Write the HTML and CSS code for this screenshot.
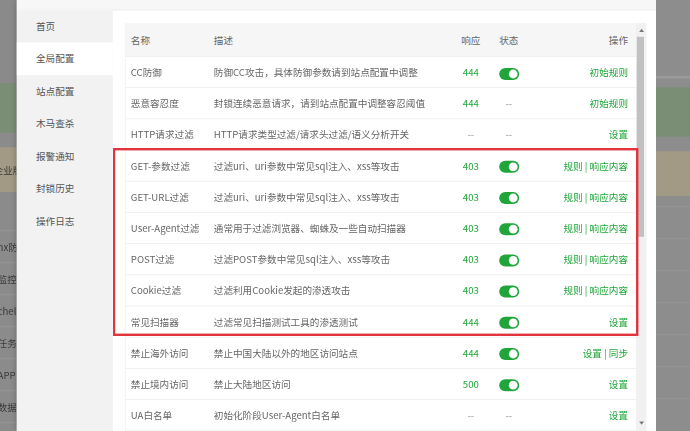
FILE: index.html
```html
<!DOCTYPE html>
<html lang="zh-CN">
<head>
    <meta charset="UTF-8">
    <meta name="viewport" content="width=device-width, initial-scale=1.0">
    <link rel="stylesheet" href="styles.css">
</head>
<body>
    <!-- the page is laid out at 125% and shrunk to 80%, so 12px text shows at 9.6px -->
    <div class="screen">
        <div class="backdrop backdrop-left">
            <div class="band band-top"></div>
            <div class="band band-green"></div>
            <div class="band band-gap"></div>
            <div class="band band-tan"><span>企业版</span></div>
            <div class="band band-gap2"></div>
            <div class="band band-row"><span>nx防</span></div>
            <div class="band band-row"><span>监控</span></div>
            <div class="band band-row"><span>chel</span></div>
            <div class="band band-row"><span>任务</span></div>
            <div class="band band-row"><span>APP</span></div>
            <div class="band band-row"><span>数据</span></div>
        </div>

        <div class="modal">
            <div class="modal-head"></div>
            <div class="modal-body">
                <ul class="menu">
                    <li>首页</li>
                    <li class="active">全局配置</li>
                    <li>站点配置</li>
                    <li>木马查杀</li>
                    <li>报警通知</li>
                    <li>封锁历史</li>
                    <li>操作日志</li>
                </ul>

                <div class="content">
                    <div class="table-wrap">
                        <table class="rules">
                            <colgroup>
                                <col class="col-name">
                                <col class="col-desc">
                                <col class="col-code">
                                <col class="col-state">
                                <col>
                            </colgroup>
                            <thead>
                                <tr>
                                    <th class="name">名称</th>
                                    <th>描述</th>
                                    <th class="center">响应</th>
                                    <th class="center">状态</th>
                                    <th class="ops">操作</th>
                                </tr>
                            </thead>
                            <tbody>
                                <tr>
                                    <td class="name">CC防御</td>
                                    <td>防御CC攻击，具体防御参数请到站点配置中调整</td>
                                    <td class="center green">444</td>
                                    <td class="center"><span class="switch"></span></td>
                                    <td class="ops"><a>初始规则</a></td>
                                </tr>
                                <tr>
                                    <td class="name">恶意容忍度</td>
                                    <td>封锁连续恶意请求，请到站点配置中调整容忍阈值</td>
                                    <td class="center green">444</td>
                                    <td class="center muted">--</td>
                                    <td class="ops"><a>初始规则</a></td>
                                </tr>
                                <tr>
                                    <td class="name">HTTP请求过滤</td>
                                    <td>HTTP请求类型过滤/请求头过滤/语义分析开关</td>
                                    <td class="center muted">--</td>
                                    <td class="center muted">--</td>
                                    <td class="ops"><a>设置</a></td>
                                </tr>
                                <tr>
                                    <td class="name">GET-参数过滤</td>
                                    <td>过滤uri、uri参数中常见sql注入、xss等攻击</td>
                                    <td class="center green">403</td>
                                    <td class="center"><span class="switch"></span></td>
                                    <td class="ops"><a>规则</a> | <a>响应内容</a></td>
                                </tr>
                                <tr>
                                    <td class="name">GET-URL过滤</td>
                                    <td>过滤uri、uri参数中常见sql注入、xss等攻击</td>
                                    <td class="center green">403</td>
                                    <td class="center"><span class="switch"></span></td>
                                    <td class="ops"><a>规则</a> | <a>响应内容</a></td>
                                </tr>
                                <tr>
                                    <td class="name">User-Agent过滤</td>
                                    <td>通常用于过滤浏览器、蜘蛛及一些自动扫描器</td>
                                    <td class="center green">403</td>
                                    <td class="center"><span class="switch"></span></td>
                                    <td class="ops"><a>规则</a> | <a>响应内容</a></td>
                                </tr>
                                <tr>
                                    <td class="name">POST过滤</td>
                                    <td>过滤POST参数中常见sql注入、xss等攻击</td>
                                    <td class="center green">403</td>
                                    <td class="center"><span class="switch"></span></td>
                                    <td class="ops"><a>规则</a> | <a>响应内容</a></td>
                                </tr>
                                <tr>
                                    <td class="name">Cookie过滤</td>
                                    <td>过滤利用Cookie发起的渗透攻击</td>
                                    <td class="center green">403</td>
                                    <td class="center"><span class="switch"></span></td>
                                    <td class="ops"><a>规则</a> | <a>响应内容</a></td>
                                </tr>
                                <tr>
                                    <td class="name">常见扫描器</td>
                                    <td>过滤常见扫描测试工具的渗透测试</td>
                                    <td class="center green">444</td>
                                    <td class="center"><span class="switch"></span></td>
                                    <td class="ops"><a>设置</a></td>
                                </tr>
                                <tr>
                                    <td class="name">禁止海外访问</td>
                                    <td>禁止中国大陆以外的地区访问站点</td>
                                    <td class="center green">444</td>
                                    <td class="center"><span class="switch"></span></td>
                                    <td class="ops"><a>设置</a> | <a>同步</a></td>
                                </tr>
                                <tr>
                                    <td class="name">禁止境内访问</td>
                                    <td>禁止大陆地区访问</td>
                                    <td class="center green">500</td>
                                    <td class="center"><span class="switch"></span></td>
                                    <td class="ops"><a>设置</a></td>
                                </tr>
                                <tr>
                                    <td class="name">UA白名单</td>
                                    <td>初始化阶段User-Agent白名单</td>
                                    <td class="center muted">--</td>
                                    <td class="center muted">--</td>
                                    <td class="ops"><a>设置</a></td>
                                </tr>
                            </tbody>
                        </table>

                        <div class="scrollbar">
                            <div class="arrow arrow-up"></div>
                            <div class="thumb"></div>
                            <div class="track"></div>
                            <div class="arrow arrow-down"></div>
                        </div>
                    </div>

                    <!-- highlight box drawn over the filter rows -->
                    <div class="highlight"></div>
                </div>
            </div>
        </div>

        <div class="backdrop backdrop-right">
            <div class="band band-rtop"></div>
            <div class="band band-line"></div>
            <div class="band band-rgap"></div>
            <div class="band band-green"></div>
            <div class="band band-gap"></div>
            <div class="band band-tan"></div>
            <div class="band band-rrow"></div>
            <div class="band band-rrow"></div>
            <div class="band band-rrow"></div>
            <div class="band band-rrow"></div>
            <div class="band band-rrow"></div>
            <div class="band band-rrow"></div>
            <div class="band band-rrow"></div>
        </div>
    </div>
</body>
</html>
```

FILE: styles.css
```css
html, body {
    margin: 0;
    padding: 0;
}

body {
    font-family: "Noto Sans CJK SC", "Noto Sans", sans-serif;
    font-size: 12px;
    width: 690px;
    height: 431px;
    overflow: hidden;
    background-color: #8b8b8b;
}

.screen {
    width: 862.5px;
    height: 538.75px;
    display: flex;
    transform: scale(0.8);
    transform-origin: 0 0;
}

/* dimmed page behind the dialog */
.backdrop {
    display: flex;
    flex-direction: column;
    overflow: hidden;
}

.backdrop-left {
    width: 21.25px;
    flex-shrink: 0;
}

.backdrop-right {
    flex: 1;
    background-color: #8d8d8d;
}

.band {
    flex-shrink: 0;
    color: #3a3a3a;
    white-space: nowrap;
    overflow: hidden;
}

.band span {
    display: block;
    margin-left: -3px;
}

.band-top {
    height: 103.75px;
    background-color: #8a8a8a;
}

.band-green {
    height: 62.5px;
    background-color: #7a8e75;
}

.band-gap {
    height: 17.5px;
}

.band-tan {
    height: 56.25px;
    line-height: 56.25px;
    background-color: #a29a84;
}

.band-tan span {
    margin-left: -8px;
}

.band-gap2 {
    height: 48px;
    border-bottom: 1px solid #999;
}

.band-row {
    height: 39px;
    line-height: 39px;
    border-bottom: 1px solid #999;
}

.band-rtop {
    height: 95px;
}

.band-line {
    height: 2.5px;
    background-color: #9b9b9b;
}

.band-rgap {
    height: 11.25px;
}

.band-rrow {
    height: 39px;
    border-top: 1px solid #999;
}

.backdrop-right .band-tan {
    margin-bottom: 12.5px;
}

/* dialog */
.modal {
    width: 798.75px;
    flex-shrink: 0;
    display: flex;
    flex-direction: column;
    background-color: #fff;
    box-shadow: 0 0 8px rgba(0, 0, 0, 0.3);
}

.modal-head {
    height: 11.5px;
    background-color: #f7f7f7;
    border-bottom: 1px solid #eee;
}

.modal-body {
    flex: 1;
    display: flex;
    min-height: 0;
}

.menu {
    width: 120px;
    margin: 0;
    padding: 0;
    list-style: none;
    background-color: #f2f2f2;
}

.menu li {
    height: 40.5px;
    line-height: 40.5px;
    padding-left: 23.75px;
    color: #555;
}

.menu li.active {
    background-color: #fff;
}

.content {
    flex: 1;
    position: relative;
    padding: 16.25px 12.5px 0 15px;
    overflow: hidden;
}

.table-wrap {
    display: flex;
}

.rules {
    width: 638.75px;
    table-layout: fixed;
    border-collapse: separate;
    border-spacing: 0;
    border-left: 1px solid #eee;
    color: #666;
}

.col-name {
    width: 102.5px;
}

.col-desc {
    width: 306.25px;
}

.col-code {
    width: 45px;
}

.col-state {
    width: 50px;
}

.rules th {
    font-weight: normal;
    text-align: left;
    line-height: 41.5px;
    padding: 0 0 0 7.5px;
    background-color: #f6f6f6;
    border-bottom: 1px solid #eee;
    color: #666;
}

.rules td {
    line-height: 37.75px;
    padding: 0 0 0 7.5px;
    border-bottom: 1px solid #eee;
    white-space: nowrap;
    overflow: hidden;
}

.rules .name {
    padding-left: 6.25px;
}

.rules .center {
    text-align: center;
    padding-left: 0;
}

.rules .ops {
    text-align: right;
    padding-right: 10px;
}

.rules td.ops {
    color: #20a53a;
}

.green {
    color: #20a53a;
}

.muted {
    color: #999;
}

.rules a {
    color: #20a53a;
}

.switch {
    display: inline-block;
    vertical-align: middle;
    position: relative;
    width: 25px;
    height: 15px;
    border-radius: 7.5px;
    background-color: #20a53a;
}

.switch::after {
    content: "";
    position: absolute;
    top: 2px;
    right: 2px;
    width: 11px;
    height: 11px;
    border-radius: 50%;
    background-color: #fff;
}

.scrollbar {
    width: 12.5px;
    display: flex;
    flex-direction: column;
    background-color: #f1f1f1;
}

.arrow {
    height: 17.5px;
    position: relative;
}

.arrow::after {
    content: "";
    position: absolute;
    left: 3.5px;
    border-left: 3px solid transparent;
    border-right: 3px solid transparent;
}

.arrow-up::after {
    top: 7px;
    border-bottom: 4px solid #777;
}

.arrow-down::after {
    top: 6px;
    border-top: 4px solid #777;
}

.thumb {
    height: 250px;
    margin: 0 2.5px 0 1.25px;
    background-color: #c1c1c1;
}

.track {
    height: 225px;
}

.highlight {
    position: absolute;
    left: 0;
    top: 172.5px;
    width: 656.25px;
    height: 235px;
    box-sizing: border-box;
    border: 3px solid #e2343c;
}
```
